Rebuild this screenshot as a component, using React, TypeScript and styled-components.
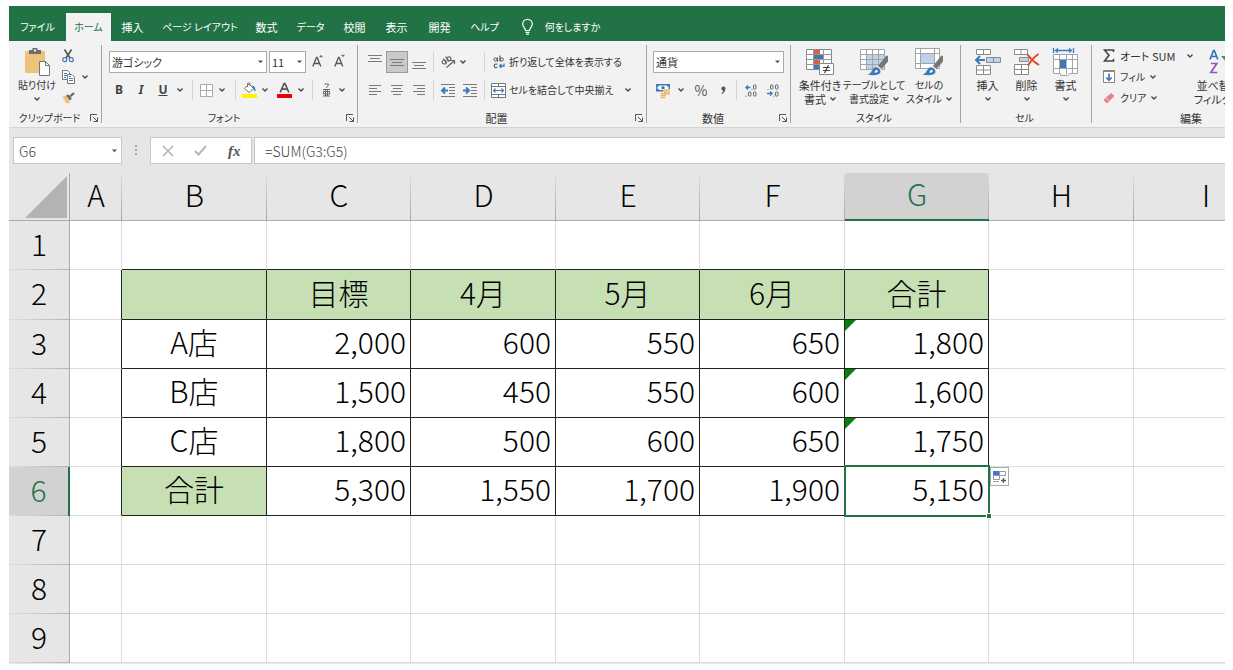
import React from "react";
import styled, { createGlobalStyle, css } from "styled-components";

const GREEN = "#217346";
const BLUE = "#3f7ab8";
const GREY = "#7a7a7a";
const FILL = "#c6e0b4";

const GlobalStyle = createGlobalStyle`
  * { box-sizing: border-box; }
  body { margin: 0; background: #fff; }
  body, button, input, select {
    font-family: "Noto Sans CJK JP", "Noto Sans", sans-serif;
    font-size: 11px;
    line-height: 14px;
    color: #333;
  }
  svg { display: block; flex: none; overflow: visible; }
`;

const Page = styled.div`
  padding: 6px 8px 6px 9px;
`;

const AppFrame = styled.div`
  display: flex;
  flex-direction: column;
  overflow: hidden;
  padding-bottom: 1px;
  background: #e6e6e6;
`;

/* ---------- Tabs ---------- */

const TabBar = styled.nav`
  display: flex;
  align-items: flex-end;
  height: 35px;
  background: ${GREEN};
  overflow: hidden;
`;

const Tab = styled.button<{ $w: number; $active?: boolean; $compact?: boolean }>`
  flex: none;
  display: flex;
  align-items: center;
  justify-content: center;
  gap: 12px;
  width: ${(p) => p.$w}px;
  height: 28px;
  padding: 0;
  border: 0;
  white-space: nowrap;
  font-size: ${(p) => (p.$compact ? 10 : 11)}px;
  font-feature-settings: "palt";
  background: ${(p) => (p.$active ? "#f2f2f2" : "transparent")};
  color: ${(p) => (p.$active ? GREEN : "#fff")};
`;

/* ---------- Ribbon ---------- */

const Ribbon = styled.div`
  display: flex;
  height: 87px;
  padding: 4px 0;
  background: #f2f2f2;
  border-bottom: 1px solid #d4d4d4;
  overflow: hidden;
  font-feature-settings: "palt";
`;

const GroupBox = styled.section<{ $w: number }>`
  flex: none;
  display: flex;
  flex-direction: column;
  justify-content: space-between;
  width: ${(p) => p.$w}px;
  border-right: 1px solid #a3a3a3;
`;

const GroupBody = styled.div<{ $pad: number }>`
  display: flex;
  height: 64px;
  padding-left: ${(p) => p.$pad}px;
`;

const GroupFooter = styled.div`
  display: flex;
  align-items: center;
  height: 10px;
  padding-right: 3px;
`;

const GroupName = styled.span<{ $compact?: boolean }>`
  flex: 1;
  text-align: center;
  font-size: ${(p) => (p.$compact ? 10 : 11)}px;
  line-height: 12px;
  white-space: nowrap;
`;

const Column = styled.div<{ $gap?: number; $top?: number; $left?: number }>`
  flex: none;
  display: flex;
  flex-direction: column;
  gap: ${(p) => p.$gap ?? 0}px;
  padding-top: ${(p) => p.$top ?? 0}px;
  padding-left: ${(p) => p.$left ?? 0}px;
`;

const Row = styled.div<{ $gap?: number; $h?: number }>`
  display: flex;
  align-items: center;
  height: ${(p) => p.$h ?? 22}px;
  gap: ${(p) => p.$gap ?? 0}px;
`;

const toolReset = css`
  flex: none;
  display: flex;
  align-items: center;
  justify-content: center;
  padding: 0;
  border: 0;
  background: transparent;
  white-space: nowrap;
  font-feature-settings: "palt";
`;

const Tool = styled.button<{ $w?: number; $on?: boolean }>`
  ${toolReset}
  width: ${(p) => p.$w ?? 22}px;
  height: 22px;
  ${(p) => p.$on && "background: #c9c9c9; border: 1px solid #9b9b9b;"}
`;

const TextTool = styled.button<{ $gap?: number; $compact?: boolean }>`
  ${toolReset}
  justify-content: flex-start;
  gap: ${(p) => p.$gap ?? 3}px;
  height: 22px;
  font-size: ${(p) => (p.$compact ? 10 : 11)}px;
`;

const IconSlot = styled.span`
  display: flex;
  justify-content: center;
  width: 15px;
`;

const ToolLabel = styled.span<{ $w?: number }>`
  text-align: left;
  width: ${(p) => (p.$w ? `${p.$w}px` : "auto")};
`;

const BigTool = styled.button<{ $w: number; $compact?: boolean }>`
  ${toolReset}
  flex-direction: column;
  justify-content: flex-start;
  width: ${(p) => p.$w}px;
  height: 64px;
  font-size: ${(p) => (p.$compact ? 10 : 11)}px;
`;

const BigIcon = styled.span`
  display: flex;
  align-items: center;
  justify-content: center;
  height: 33px;
`;

const BigLine = styled.span`
  display: flex;
  align-items: center;
  gap: 4px;
  height: 14px;
  line-height: 14px;
`;

const Glyph = styled.span<{ $italic?: boolean; $underline?: boolean }>`
  font-family: "Noto Sans", sans-serif;
  font-weight: 700;
  font-size: 12px;
  color: #444;
  font-style: ${(p) => (p.$italic ? "italic" : "normal")};
  text-decoration: ${(p) => (p.$underline ? "underline" : "none")};
`;

const Percent = styled.span`
  font-size: 14px;
  color: #555;
`;

const Divider = styled.span<{ $m?: number }>`
  flex: none;
  width: 1px;
  height: 20px;
  margin: 0 ${(p) => p.$m ?? 5}px;
  background: #d4d4d4;
`;

const SelectWrap = styled.span<{ $w: number }>`
  position: relative;
  flex: none;
  width: ${(p) => p.$w}px;
  height: 22px;
  & > svg {
    position: absolute;
    right: 4px;
    top: 9px;
    pointer-events: none;
  }
`;

const Select = styled.select`
  appearance: none;
  width: 100%;
  height: 22px;
  padding: 0 2px;
  border: 1px solid #ababab;
  border-radius: 0;
  background: #fff;
  font-feature-settings: "palt";
`;

/* ---------- Formula bar ---------- */

const FormulaBar = styled.div`
  display: flex;
  height: 45px;
  padding: 9px 0 9px 4px;
`;

const NameBox = styled.span`
  position: relative;
  flex: none;
  width: 109px;
  & > svg {
    position: absolute;
    right: 5px;
    top: 12px;
  }
`;

const BarInput = styled.input<{ $pad: number; $open?: boolean }>`
  display: block;
  width: 100%;
  height: 27px;
  padding: 0 ${(p) => p.$pad}px;
  border: 1px solid #c6c6c6;
  border-right-width: ${(p) => (p.$open ? 0 : 1)}px;
  border-radius: 0;
  background: #fff;
  font-size: 14px;
  font-weight: 300;
  color: #444;
`;

const Grip = styled.span`
  flex: none;
  display: flex;
  align-items: center;
  justify-content: center;
  width: 28px;
`;

const FormulaButtons = styled.div`
  flex: none;
  display: flex;
  align-items: center;
  justify-content: space-around;
  width: 102px;
  margin-right: 2px;
  background: #fff;
  border: 1px solid #c6c6c6;
`;

const FormulaField = styled.div`
  flex: 1;
  min-width: 0;
`;

/* ---------- Sheet ---------- */

const SheetView = styled.main`
  overflow: hidden;
`;

const Sheet = styled.table`
  table-layout: fixed;
  width: 1269px;
  border-collapse: separate;
  border-spacing: 0;
  font-size: 30px;
  font-weight: 300;
  line-height: 40px;
  color: #000;
`;

const Col = styled.col<{ $w: number }>`
  width: ${(p) => p.$w}px;
`;

const Corner = styled.td`
  height: 48px;
  padding: 0 2px 2px 0;
  border-right: 1px solid #ababab;
  border-bottom: 1px solid #ababab;
  vertical-align: bottom;
  & > svg { margin-left: auto; }
`;

const ColHead = styled.th<{ $on: boolean }>`
  height: 48px;
  padding: 0 0 6px;
  font-weight: 300;
  text-align: center;
  color: ${(p) => (p.$on ? GREEN : "#000")};
  border-bottom: ${(p) => (p.$on ? `2px solid ${GREEN}` : "1px solid #ababab")};
  background: linear-gradient(#dedede, #a6a6a6) right / 1px 100% no-repeat ${(p) => (p.$on ? "#d2d2d2" : "#e6e6e6")};
`;

const RowHead = styled.th<{ $on: boolean }>`
  padding: 0 0 6px;
  font-weight: 300;
  text-align: center;
  color: ${(p) => (p.$on ? GREEN : "#000")};
  border-right: ${(p) => (p.$on ? `2px solid ${GREEN}` : "1px solid #ababab")};
  background: linear-gradient(90deg, #dedede, #b4b4b4) bottom / 100% 1px no-repeat ${(p) => (p.$on ? "#d2d2d2" : "#e6e6e6")};
`;

const SheetRow = styled.tr<{ $h: number }>`
  height: ${(p) => p.$h}px;
`;

const Cell = styled.td<{ $fill: boolean; $num: boolean; $right: boolean; $bottom: boolean }>`
  position: relative;
  padding: 0 ${(p) => (p.$num ? 4 : 0)}px 6px 0;
  text-align: ${(p) => (p.$num ? "right" : "center")};
  background: ${(p) => (p.$fill ? FILL : "#fff")};
  border-right: 1px solid ${(p) => (p.$right ? "#222" : "#dcdcdc")};
  border-bottom: 1px solid ${(p) => (p.$bottom ? "#222" : "#dcdcdc")};
`;

const ErrorMark = styled.span`
  position: absolute;
  left: 0;
  top: 0;
  border-top: 11px solid #0a7d0a;
  border-right: 11px solid transparent;
`;

const Selection = styled.span`
  position: absolute;
  inset: -2px -2px -2px -1px;
  z-index: 1;
  border: 2px solid ${GREEN};
  pointer-events: none;
`;

const FillHandle = styled.span`
  position: absolute;
  right: -3px;
  bottom: -3px;
  width: 4px;
  height: 4px;
  background: ${GREEN};
  outline: 1px solid #fff;
`;

const QuickButton = styled.button`
  position: absolute;
  left: 100%;
  top: 0;
  z-index: 2;
  width: 19px;
  height: 19px;
  margin-left: 2px;
  padding: 1px;
  border: 1px solid #ababab;
  background: #fff;
`;

/* ---------- Icons ---------- */

type SvgProps = { w: number; h: number; children: React.ReactNode };
const Svg = ({ w, h, children }: SvgProps) => (
  <svg width={w} height={h} viewBox={`0 0 ${w} ${h}`} fill="none" aria-hidden="true">
    {children}
  </svg>
);

const Chevron = () => (
  <Svg w={6} h={4}><path d="M.5 .5 3 3 5.500 .5" stroke="#444" strokeWidth="1.300" /></Svg>
);
const Caret = () => (
  <Svg w={5} h={4}><path d="M0 .5h5L2.500 3.200z" fill="#555" /></Svg>
);
const Launcher = () => (
  <Svg w={8} h={8}>
    <path d="M.5 7V.5H7M3 3l4 4M7.500 3.500v4h-4" stroke="#555" />
  </Svg>
);
const Bulb = () => (
  <Svg w={11} h={16}>
    <path d="M3.500 11.500C3.500 9 .7 8 .7 5a4.800 4.600 0 0 1 9.600 0c0 3-2.800 4-2.800 6.500zM3.500 13.300h4M4 15.200h3" stroke="#fff" strokeWidth="1.200" />
  </Svg>
);
const PasteIcon = () => (
  <Svg w={27} h={30}>
    <path d="M1 4h20v11h-6v11H1z" fill="#edc27c" />
    <path d="M5 3h3.500V1h5v2H17v4H5z" fill="#6d6d6d" />
    <path d="M10 2.500h2v2h-2z" fill="#f2f2f2" />
    <path d="M15.500 14.500h6l4 4v10h-10z" fill="#fff" stroke="#777" />
    <path d="M21.500 14.500v4h4" stroke="#777" />
  </Svg>
);
const CutIcon = () => (
  <Svg w={12} h={14}>
    <path d="M2.500 .5 8 9M9.500 .5 4 9" stroke="#555" strokeWidth="1.600" />
    <circle cx="2.700" cy="10.700" r="2" stroke={BLUE} strokeWidth="1.200" />
    <circle cx="9.300" cy="10.700" r="2" stroke={BLUE} strokeWidth="1.200" />
  </Svg>
);
const CopyIcon = () => (
  <Svg w={13} h={14}>
    <path d="M.5 .5h5l2 2v7h-7z" fill="#fff" stroke="#777" />
    <path d="M2 3.500h3M2 5.500h3M2 7.500h2" stroke={BLUE} />
    <path d="M5.500 4.500h4.500l2.500 2.500v6.500h-7z" fill="#fff" stroke="#777" />
    <path d="M7 8.500h4M7 10.500h4M7 6.500h2" stroke={BLUE} />
  </Svg>
);
const BrushIcon = () => (
  <Svg w={13} h={12}>
    <path d="M.5 5 4 3.500 8.500 8 6.500 11.500 4 11z" fill="#edc27c" />
    <path d="M5 3 9 7.500" stroke="#666" strokeWidth="2.400" />
    <path d="M8 4.500 12 1" stroke="#666" strokeWidth="2.200" />
  </Svg>
);
const SizeIcon = ({ up }: { up?: boolean }) => (
  <Svg w={12} h={16}>
    <path d="M.8 12.500 4.500 3.500h.6L8.800 12.500M2.200 9.500h5.200" stroke="#555" strokeWidth="1.300" />
    <path d={up ? "M7 3.200 9 .8l2 2.400z" : "M7 .8h4L9 3.200z"} fill={BLUE} />
  </Svg>
);
const BorderIcon = () => (
  <Svg w={13} h={13}>
    <path d="M.5 .5h12v12H.5zM6.500 0v13M0 6.500h13" stroke="#ababab" fill="#fff" />
  </Svg>
);
const FillIcon = () => (
  <Svg w={15} h={16}>
    <path d="M2.500 6.500 7 2l4.500 4.500L7 10.500z" fill="#fff" stroke="#777" />
    <path d="M5.500 5V1.500q1.500-1.500 2.500 0V4" stroke="#777" />
    <path d="M10.500 4q3 .5 2.500 5l-1.500-2.500z" fill={BLUE} stroke={BLUE} />
    <path d="M0 12h15v4H0z" fill="#fff200" />
  </Svg>
);
const FontColorIcon = () => (
  <Svg w={15} h={16}>
    <path d="M3.200 10.500 7 1.500h1L11.800 10.500M4.700 7.200h5.600" stroke="#555" strokeWidth="1.700" />
    <path d="M0 12h15v4H0z" fill="#e60012" />
  </Svg>
);
const RubyIcon = () => (
  <Svg w={9} h={15}>
    <path d="M2.500 1h4q-.2 2.500-2.500 4M1 6.500h7M1 13h7M3.500 6.500V13M5.500 6.500V13M1.500 8.500h6v2.500h-6z" stroke="#666" />
  </Svg>
);
const LinesIcon = ({ kind, shift = 0 }: { kind: "wide" | "left" | "center" | "right"; shift?: number }) => {
  const wide = kind === "wide";
  const ys = wide ? [5, 8, 11] : [3, 6, 9, 12];
  return (
    <Svg w={14} h={16}>
      {ys.map((y, i) => {
        const len = (i % 2 === 0 ? 12 : 8) + (wide ? 2 : 0);
        const x = kind === "left" ? 1 : kind === "right" ? 13 - len : (14 - len) / 2;
        return <rect key={y} x={x} y={y + shift} width={len} height="1" fill={GREY} />;
      })}
    </Svg>
  );
};
const OrientIcon = () => (
  <Svg w={15} h={14}>
    <circle cx="3.200" cy="7" r="2" stroke="#666" strokeWidth="1.200" />
    <path d="M2.200 3.500 5.800 8.200M4.500 1.500 8.300 6.500" stroke="#666" strokeWidth="1.200" />
    <circle cx="8" cy="3.800" r="2" stroke="#666" strokeWidth="1.200" />
    <path d="M5.500 12.500 13 6M10 5.500h3.500v3.500" stroke="#666" strokeWidth="1.200" />
  </Svg>
);
const IndentIcon = ({ out }: { out?: boolean }) => (
  <Svg w={14} h={13}>
    <path d="M0 .5h14M8 3.500h6M8 6.500h6M8 9.500h6M0 12.500h14" stroke={GREY} />
    <path d={out ? "M7 6.500H1.500M4 3.500 1 6.500l3 3" : "M0 6.500h5.500M3 3.500l3 3-3 3"} stroke={BLUE} strokeWidth="2" />
  </Svg>
);
const WrapIcon = () => (
  <Svg w={12} h={14}>
    <circle cx="2.500" cy="4.500" r="1.600" stroke="#555" />
    <path d="M4.500 2.500v4M7 .5v6" stroke="#555" strokeWidth="1.200" />
    <circle cx="8.800" cy="4.500" r="1.600" stroke="#555" />
    <path d="M4.300 9.300q-3-1-3 1.500t3 1.500" stroke="#555" strokeWidth="1.200" />
    <path d="M11 8.500v2.500H6.500M8.500 9 6.500 11l2 2" stroke={BLUE} strokeWidth="1.300" />
  </Svg>
);
const MergeIcon = () => (
  <Svg w={15} h={15}>
    <path d="M.5 .5h14v14H.5zM.5 3.500h14M.5 11.500h14M7.500 .5v3M7.500 11.500v3" stroke="#777" fill="#fff" />
    <path d="M2 7.500h11M4.500 5.500l-2 2 2 2M10.500 5.500l2 2-2 2" stroke={BLUE} strokeWidth="1.200" />
  </Svg>
);
const MoneyIcon = () => (
  <Svg w={15} h={15}>
    <path d="M.7 1.700h12.600v6H.7z" fill="#fff" stroke={BLUE} strokeWidth="1.400" />
    <path d="M1 2h2v1.500H1zM11 2h2v1.500h-2zM1 6h2v1.500H1z" fill={BLUE} />
    <circle cx="7" cy="4.700" r="1.700" fill={BLUE} />
    <path d="M7.500 6h7v6h-7zM4 9.500h6V15H4z" fill="#fff" />
    <path d="M8 7h6M8 9h6M8 11h6M4.500 10.500h5M4.500 12.500h5M4.500 14.500h5" stroke="#edb563" strokeWidth="1.300" />
  </Svg>
);
const CommaIcon = () => (
  <Svg w={5} h={9}><path d="M.3 2.300a2 2 0 1 1 4.200.6Q4 6 1 8.300l-.5-.5Q2 6 2 4.400A2 2 0 0 1 .3 2.300z" fill="#555" /></Svg>
);
const DecimalIcon = ({ more }: { more?: boolean }) => (
  <Svg w={12} h={13}>
    {more ? (
      <>
        <path d="M5.500 3.500H1M3 1.500l-2 2 2 2" stroke={BLUE} strokeWidth="1.400" />
        <rect x="8.500" y=".8" width="2.500" height="4.400" rx="1.200" stroke="#666" />
        <path d="M6.500 5.500h1M.5 12.200h1" stroke="#666" />
        <rect x="3.500" y="7.800" width="2.500" height="4.400" rx="1.200" stroke="#666" />
        <rect x="8.500" y="7.800" width="2.500" height="4.400" rx="1.200" stroke="#666" />
      </>
    ) : (
      <>
        <path d="M0 9.500h5M3 7.500l2 2-2 2" stroke={BLUE} strokeWidth="1.400" />
        <rect x="3.500" y=".8" width="2.500" height="4.400" rx="1.200" stroke="#666" />
        <rect x="8.500" y=".8" width="2.500" height="4.400" rx="1.200" stroke="#666" />
        <rect x="8.500" y="7.800" width="2.500" height="4.400" rx="1.200" stroke="#666" />
        <path d="M.5 5.500h1M6.500 12.200h1" stroke="#666" />
      </>
    )}
  </Svg>
);
const CondIcon = () => (
  <Svg w={28} h={28}>
    <path d="M.5 1.500h25v20H.5z" fill="#fff" stroke="#888" />
    <path d="M8 2h6v5H8zM8 12h6v5H8z" fill="#d4613f" />
    <path d="M8 7h9v5H8zM8 17h5v4H8z" fill="#3f78b5" />
    <path d="M0 6.500h26M0 11.500h26M0 16.500h26M7.500 1v21M17.500 1v21" stroke="#999" />
    <path d="M13.500 15.500h14v11h-14z" fill="#fff" stroke="#888" />
    <path d="M17 19.500h7M17 22.500h7M22.500 17l-4 8" stroke="#444" strokeWidth="1.200" />
  </Svg>
);
const Paint = () => (
  <>
    <path d="M17.500 18.500 26.500 7.500 28 8v5.500L21 21.500z" fill="#777" />
    <path d="M17 18 21.500 21.800" stroke="#f2f2f2" strokeWidth="1.200" />
    <path d="M7.500 26.500q3.500-1 4.500-4 2-4.500 5.500-3l2.500 2.200q1.500 3-1.500 4.500-4 1.800-11 .3z" fill={BLUE} />
    <path d="M14.500 24.500q.2-2.500 2-2.500t1.300 1.500q-.8 1.500-3.300 1z" fill="#fff" />
  </>
);
const TableIcon = () => (
  <Svg w={28} h={28}>
    <path d="M.5 1.500h24v20H.5z" fill="#fff" />
    <path d="M6 6h18.500v15.500H6z" fill="#bdd3ea" />
    <path d="M.5 1.500h24v20H.5zM0 6.500h25M0 11.500h25M0 16.500h25M6.500 1v21M12.500 1v21M18.500 1v21" stroke="#a3a3a3" />
    <Paint />
  </Svg>
);
const CellStyleIcon = () => (
  <Svg w={28} h={28}>
    <path d="M.5 .5h24v20H.5zM0 5.500h25M0 15.500h25M5.500 0v21M19.500 0v21" fill="#fff" stroke="#a3a3a3" />
    <path d="M6 6h13v9H6z" fill="#bdd3ea" />
    <Paint />
  </Svg>
);
const InsertIcon = () => (
  <Svg w={27} h={28}>
    <path d="M2.500 1.500h14v5h-14zM9.500 1.500v5M2.500 17.500h14v9h-14zM2.500 22h14M9.500 17.500v9" fill="#fff" stroke="#8a8a8a" />
    <path d="M12.500 9.500h14v5h-14zM19.500 9.500v5" fill="#bdd3ea" stroke="#8a8a8a" />
    <path d="M11 12H2M6 8l-4 4 4 4" stroke={BLUE} strokeWidth="2" />
  </Svg>
);
const DeleteIcon = () => (
  <Svg w={27} h={28}>
    <path d="M1.500 1.500h13v5h-13zM8 1.500v5M1.500 16.500h14v10h-14zM1.500 21.500h14M8.500 16.500v10" fill="#fff" stroke="#8a8a8a" />
    <path d="M6.500 9.500h9v4h-9z" fill="#bdd3ea" stroke="#8a8a8a" />
    <path d="M14.500 6.500Q19 13 26 17M25.500 6q-6 4-10.500 11.500" stroke="#dd4b2c" strokeWidth="2" />
  </Svg>
);
const FormatIcon = () => (
  <Svg w={27} h={28}>
    <path d="M1.500 0v5M21.500 0v5M3 2.500h17M6 .5l-2.500 2L6 4.500M17 .5l2.500 2-2.500 2" stroke={BLUE} strokeWidth="1.300" />
    <path d="M1.500 6.500h24v19h-24z" fill="#fff" />
    <path d="M1.500 6.500h24v19h-8l-2 2h-7v-2h-7zM1 11.500h25M1 20.500h25M7.500 6v20M14.500 6v6M14.500 20v6M20.500 6v20" stroke="#a3a3a3" />
    <path d="M8 12h6.500v8H8z" fill="#3f78b5" />
  </Svg>
);
const SigmaIcon = () => (
  <Svg w={12} h={13}><path d="M10.500 3V1H1.500L6 6.300 1.500 12h9v-2" stroke="#444" strokeWidth="1.600" /></Svg>
);
const FillDownIcon = () => (
  <Svg w={12} h={13}>
    <path d="M.5 .5h11v12H.5z" fill="#fff" stroke="#888" />
    <path d="M.5 1h11" stroke="#888" strokeWidth="2" />
    <path d="M6 3.500v7M3.200 7.500 6 10.300l2.800-2.800" stroke={BLUE} strokeWidth="1.700" />
  </Svg>
);
const EraserIcon = () => (
  <Svg w={12} h={12}>
    <path d="M.5 8 8 1l3.500 3L4 11.500z" fill="#e8808f" />
    <path d="M3 5.800 6.600 9.300" stroke="#f6ccd2" />
  </Svg>
);
const SortIcon = () => (
  <Svg w={28} h={26}>
    <path d="M1 10.500 4.500 1.500h.8L8.800 10.500M2.300 7.500h5.200" stroke="#2f77c4" strokeWidth="1.700" />
    <path d="M1.800 14.500h6L1.800 23.500h6.500" stroke="#9a4fc4" strokeWidth="1.700" />
    <path d="M12 7h14l-5 6v8l-4-3v-5z" fill="#777" />
  </Svg>
);
const CancelIcon = () => (
  <Svg w={12} h={12}><path d="M1 1l10 10M11 1 1 11" stroke="#b5b5b5" strokeWidth="1.600" /></Svg>
);
const EnterIcon = () => (
  <Svg w={13} h={11}><path d="M1 6l3.500 3.500L12 1" stroke="#b5b5b5" strokeWidth="2" /></Svg>
);
const GripIcon = () => (
  <Svg w={2} h={11}><path d="M0 0h2v2H0zM0 4h2v2H0zM0 8h2v2H0z" fill="#a8a8a8" /></Svg>
);
const CornerIcon = () => (
  <Svg w={42} h={42}><path d="M42 0v42H0z" fill="#b3b3b3" /></Svg>
);
const QuickIcon = () => (
  <Svg w={15} h={15}>
    <path d="M1.500 2.500h12v4h-12zM7.500 2.500v4M1.500 6.500h6v4h-6z" stroke="#999" fill="#fff" />
    <path d="M1 2h6v4H1z" fill="#3c78d8" />
    <path d="M1.500 12.500h6" stroke="#777" strokeDasharray="2 1" />
    <path d="M11.500 9v5M9 11.500h5" stroke="#555" strokeWidth="1.300" />
  </Svg>
);

const FxLabel = styled.span`
  font-family: "Liberation Serif", serif;
  font-style: italic;
  font-weight: 700;
  font-size: 15px;
  color: #555;
`;

/* ---------- Composed parts ---------- */

const TABS: { name: string; w: number; compact?: boolean }[] = [
  { name: "ファイル", w: 57, compact: true },
  { name: "ホーム", w: 45, compact: true },
  { name: "挿入", w: 43 },
  { name: "ページ レイアウト", w: 92, compact: true },
  { name: "数式", w: 41 },
  { name: "データ", w: 47, compact: true },
  { name: "校閲", w: 41 },
  { name: "表示", w: 43 },
  { name: "開発", w: 43 },
  { name: "ヘルプ", w: 47, compact: true },
];

type GroupProps = { name: string; w: number; pad: number; launcher?: boolean; compact?: boolean; children: React.ReactNode };
const Group = ({ name, w, pad, launcher, compact, children }: GroupProps) => (
  <GroupBox $w={w} aria-label={name}>
    <GroupBody $pad={pad}>{children}</GroupBody>
    <GroupFooter>
      <GroupName $compact={compact}>{name}</GroupName>
      {launcher && <Tool $w={8} aria-label={`${name}の詳細`}><Launcher /></Tool>}
    </GroupFooter>
  </GroupBox>
);

const More = ({ w = 14, label }: { w?: number; label: string }) => (
  <Tool $w={w} aria-label={`${label}のオプション`}><Chevron /></Tool>
);

const DropDown = ({ w, label, value }: { w: number; label: string; value: string }) => (
  <SelectWrap $w={w}>
    <Select aria-label={label} defaultValue={value}><option>{value}</option></Select>
    <Caret />
  </SelectWrap>
);

type BigProps = { w: number; icon: React.ReactNode; lines: string[]; stacked?: boolean; compact?: boolean };
const Big = ({ w, icon, lines, stacked, compact }: BigProps) => (
  <BigTool $w={w} $compact={compact}>
    <BigIcon>{icon}</BigIcon>
    {lines.map((line, i) => (
      <BigLine key={line}>{line}{!stacked && i === lines.length - 1 && <Chevron />}</BigLine>
    ))}
    {stacked && <BigLine><Chevron /></BigLine>}
  </BigTool>
);

const COLS: [string, number][] = [
  ["A", 52], ["B", 145], ["C", 144], ["D", 145], ["E", 144], ["F", 145], ["G", 144], ["H", 145], ["I", 144],
];
const ROW_HEIGHTS = [49, 50, 49, 49, 49, 49, 49, 49, 49];
const DATA: Record<number, string[]> = {
  2: ["", "目標", "4月", "5月", "6月", "合計"],
  3: ["A店", "2,000", "600", "550", "650", "1,800"],
  4: ["B店", "1,500", "450", "550", "600", "1,600"],
  5: ["C店", "1,800", "500", "600", "650", "1,750"],
  6: ["合計", "5,300", "1,550", "1,700", "1,900", "5,150"],
};

const SheetCell = ({ row, col }: { row: number; col: number }) => {
  const text = DATA[row]?.[col - 1] ?? "";
  const inRows = row >= 2 && row <= 6;
  const inCols = col >= 1 && col <= 6;
  const selected = row === 6 && col === 6;
  return (
    <Cell
      $fill={inCols && (row === 2 || (row === 6 && col === 1))}
      $num={row > 2 && col > 1}
      $right={inRows && col <= 6}
      $bottom={inCols && row <= 6}
    >
      {text}
      {col === 6 && row >= 3 && row <= 5 && <ErrorMark />}
      {selected && (
        <>
          <Selection><FillHandle /></Selection>
          <QuickButton aria-label="クイック分析"><QuickIcon /></QuickButton>
        </>
      )}
    </Cell>
  );
};

export default function App() {
  return (
    <Page>
      <GlobalStyle />
      <AppFrame>
        <TabBar>
          {TABS.map(({ name, w, compact }) => (
            <Tab key={name} $w={w} $active={name === "ホーム"} $compact={compact}>{name}</Tab>
          ))}
          <Tab $w={106} $compact><Bulb />何をしますか</Tab>
        </TabBar>

        <Ribbon>
          <Group name="クリップボード" w={93} pad={8} launcher compact>
            <Big w={40} icon={<PasteIcon />} lines={["貼り付け"]} stacked compact />
            <Column>
              <Row $h={21}><Tool aria-label="切り取り"><CutIcon /></Tool></Row>
              <Row $h={21}><Tool aria-label="コピー"><CopyIcon /></Tool><More w={12} label="コピー" /></Row>
              <Row $h={21}><Tool aria-label="書式のコピー"><BrushIcon /></Tool></Row>
            </Column>
          </Group>

          <Group name="フォント" w={256} pad={7} launcher compact>
            <Column $gap={6} $top={6}>
              <Row $gap={2}>
                <DropDown w={158} label="フォント名" value="游ゴシック" />
                <DropDown w={37} label="フォント サイズ" value="11" />
                <Tool $w={20} aria-label="拡大"><SizeIcon up /></Tool>
                <Tool $w={20} aria-label="縮小"><SizeIcon /></Tool>
              </Row>
              <Row>
                <Tool $w={20} aria-label="太字"><Glyph>B</Glyph></Tool>
                <Tool $w={24} aria-label="斜体"><Glyph $italic>I</Glyph></Tool>
                <Tool $w={20} aria-label="下線"><Glyph $underline>U</Glyph></Tool>
                <More label="下線" />
                <Divider />
                <Tool $w={16} aria-label="罫線"><BorderIcon /></Tool>
                <More w={16} label="罫線" />
                <Divider />
                <Tool $w={16} aria-label="塗りつぶし"><FillIcon /></Tool>
                <More w={16} label="塗りつぶし" />
                <Tool aria-label="文字の色"><FontColorIcon /></Tool>
                <More w={12} label="文字の色" />
                <Divider />
                <Tool $w={16} aria-label="ふりがな"><RubyIcon /></Tool>
                <More w={16} label="ふりがな" />
              </Row>
            </Column>
          </Group>

          <Group name="配置" w={289} pad={6} launcher>
            <Column $gap={6} $top={6}>
              <Row>
                <Tool aria-label="上揃え"><LinesIcon kind="wide" shift={-4} /></Tool>
                <Tool $on aria-label="上下中央揃え"><LinesIcon kind="wide" /></Tool>
                <Tool aria-label="下揃え"><LinesIcon kind="wide" shift={3} /></Tool>
                <Divider $m={3} />
                <Tool aria-label="方向"><OrientIcon /></Tool>
                <More w={8} label="方向" />
              </Row>
              <Row>
                <Tool aria-label="左揃え"><LinesIcon kind="left" /></Tool>
                <Tool aria-label="中央揃え"><LinesIcon kind="center" /></Tool>
                <Tool aria-label="右揃え"><LinesIcon kind="right" /></Tool>
                <Divider $m={3} />
                <Tool aria-label="インデントを減らす"><IndentIcon out /></Tool>
                <Tool aria-label="インデントを増やす"><IndentIcon /></Tool>
              </Row>
            </Column>
            <Column $gap={6} $top={6}>
              <Row><Divider $m={3} /></Row>
              <Row><Divider $m={3} /></Row>
            </Column>
            <Column $gap={6} $top={6} $left={3}>
              <Row><TextTool $compact><IconSlot><WrapIcon /></IconSlot>折り返して全体を表示する</TextTool></Row>
              <Row>
                <TextTool $compact><IconSlot><MergeIcon /></IconSlot>セルを結合して中央揃え</TextTool>
                <More w={28} label="セルを結合して中央揃え" />
              </Row>
            </Column>
          </Group>

          <Group name="数値" w={144} pad={6} launcher>
            <Column $gap={6} $top={6}>
              <Row><DropDown w={131} label="表示形式" value="通貨" /></Row>
              <Row>
                <Tool $w={20} aria-label="通貨表示形式"><MoneyIcon /></Tool>
                <More w={16} label="通貨表示形式" />
                <Tool $w={24} aria-label="パーセント"><Percent>%</Percent></Tool>
                <Tool $w={20} aria-label="桁区切り"><CommaIcon /></Tool>
                <Divider $m={3} />
                <Tool aria-label="小数点以下の表示桁数を増やす"><DecimalIcon more /></Tool>
                <Tool aria-label="小数点以下の表示桁数を減らす"><DecimalIcon /></Tool>
              </Row>
            </Column>
          </Group>

          <Group name="スタイル" w={170} pad={6} compact>
            <Big w={46} icon={<CondIcon />} lines={["条件付き", "書式"]} />
            <Big w={62} icon={<TableIcon />} lines={["テーブルとして", "書式設定"]} compact />
            <Big w={48} icon={<CellStyleIcon />} lines={["セルの", "スタイル"]} compact />
          </Group>

          <Group name="セル" w={131} pad={7} compact>
            <Big w={39} icon={<InsertIcon />} lines={["挿入"]} stacked />
            <Big w={39} icon={<DeleteIcon />} lines={["削除"]} stacked />
            <Big w={39} icon={<FormatIcon />} lines={["書式"]} stacked />
          </Group>

          <Group name="編集" w={202} pad={11}>
            <Column>
              <Row $h={21}><TextTool $gap={5}><SigmaIcon /><ToolLabel $w={62}>オート SUM</ToolLabel><Chevron /></TextTool></Row>
              <Row $h={21}><TextTool $gap={5} $compact><FillDownIcon />フィル<Chevron /></TextTool></Row>
              <Row $h={21}><TextTool $gap={5} $compact><EraserIcon />クリア<Chevron /></TextTool></Row>
            </Column>
            <Big w={60} icon={<SortIcon />} lines={["並べ替えと", "フィルター"]} />
          </Group>
        </Ribbon>

        <FormulaBar>
          <NameBox><BarInput $pad={5} aria-label="名前ボックス" defaultValue="G6" /><Caret /></NameBox>
          <Grip><GripIcon /></Grip>
          <FormulaButtons>
            <Tool aria-label="キャンセル"><CancelIcon /></Tool>
            <Tool aria-label="入力"><EnterIcon /></Tool>
            <Tool aria-label="関数の挿入"><FxLabel>fx</FxLabel></Tool>
          </FormulaButtons>
          <FormulaField><BarInput $pad={10} $open aria-label="数式バー" defaultValue="=SUM(G3:G5)" /></FormulaField>
        </FormulaBar>

        <SheetView>
          <Sheet>
            <colgroup>
              <Col $w={61} />
              {COLS.map(([name, w]) => <Col key={name} $w={w} />)}
            </colgroup>
            <thead>
              <tr>
                <Corner><CornerIcon /></Corner>
                {COLS.map(([name]) => <ColHead key={name} scope="col" $on={name === "G"}>{name}</ColHead>)}
              </tr>
            </thead>
            <tbody>
              {ROW_HEIGHTS.map((h, i) => (
                <SheetRow key={i} $h={h}>
                  <RowHead scope="row" $on={i === 5}>{i + 1}</RowHead>
                  {COLS.map(([name], c) => <SheetCell key={name} row={i + 1} col={c} />)}
                </SheetRow>
              ))}
            </tbody>
          </Sheet>
        </SheetView>
      </AppFrame>
    </Page>
  );
}
